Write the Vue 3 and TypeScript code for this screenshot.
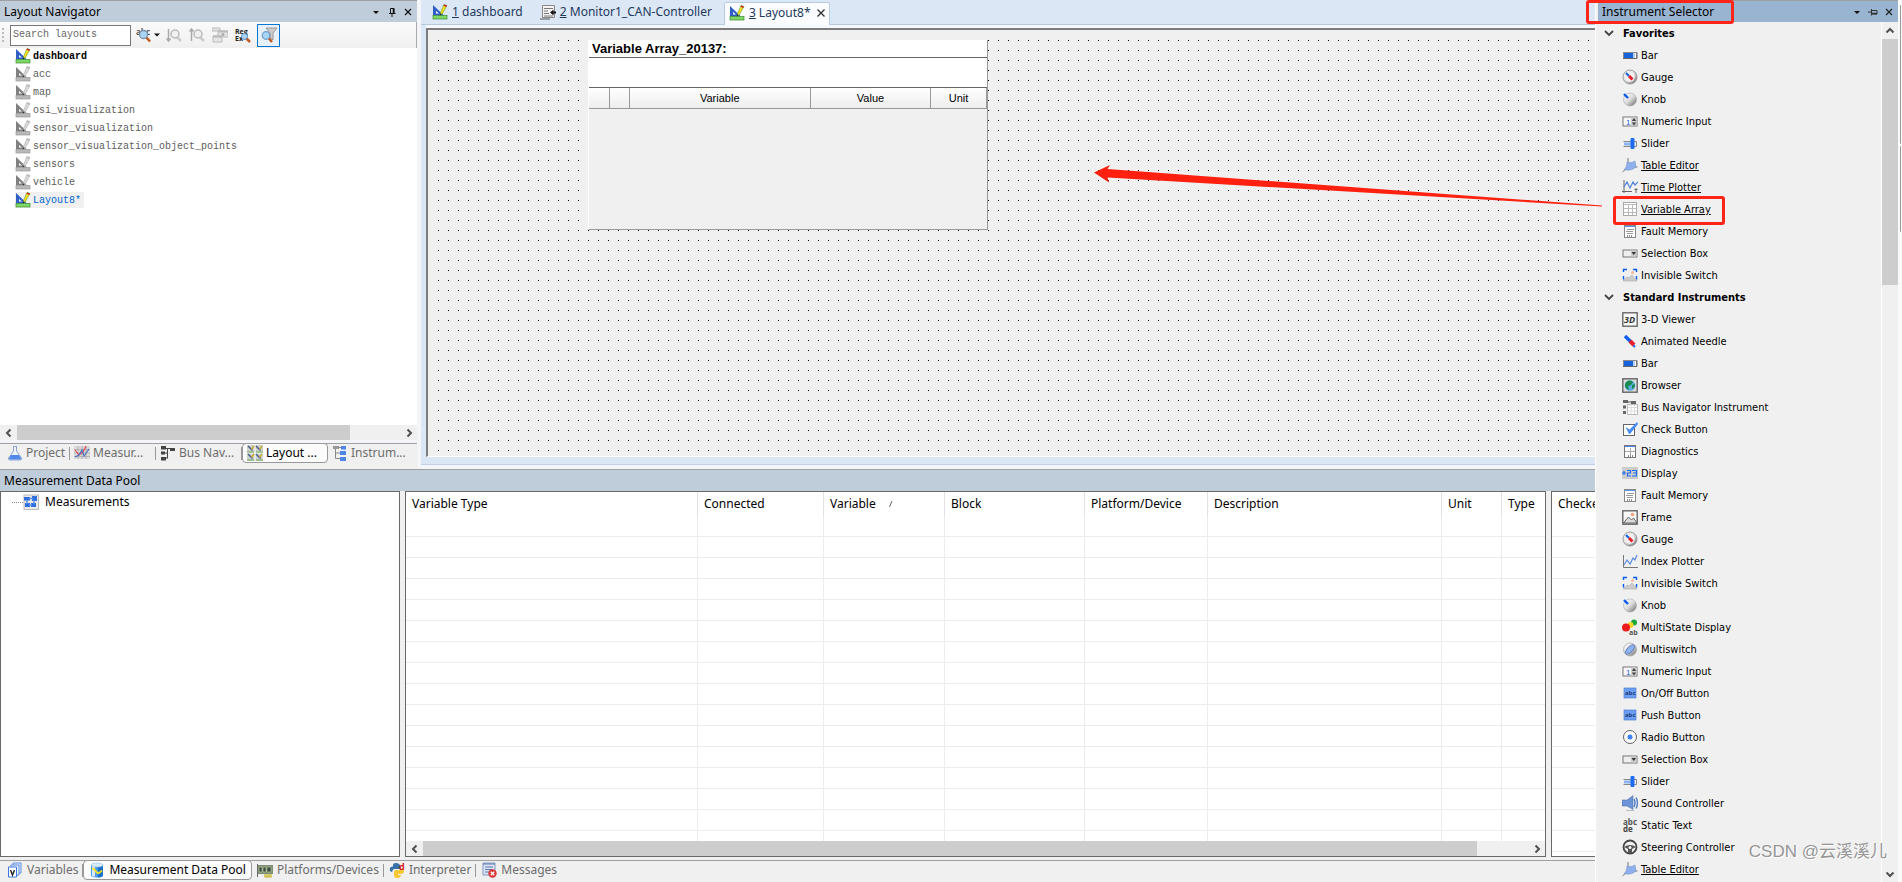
<script setup lang="ts">
import { ref } from 'vue'

const bar = '<rect x="1.5" y="5.5" width="13" height="6" fill="#fff" stroke="#888"/><rect x="2" y="6" width="9" height="5" fill="#1663dc"/><rect x="11" y="6" width="2" height="5" fill="#b8cff5"/><path d="M1 11.5h14v-6" fill="none" stroke="#666"/>'
const gauge = '<circle cx="8" cy="8" r="7" fill="url(#silver)" stroke="#888" stroke-width=".8"/><circle cx="8" cy="8" r="4.800" fill="#f3f3f3"/><path d="M4 4l3 3" stroke="#1663dc" stroke-width="2.200"/><path d="M7 7l3.500 3.500" stroke="#e81e2c" stroke-width="3"/>'
const knob = '<circle cx="8" cy="8.500" r="6.500" fill="url(#silver)" stroke="#999" stroke-width=".5"/><path d="M2 3l4 4" stroke="#0a5cf0" stroke-width="2.400"/>'
const numeric = '<rect x="1" y="4" width="14" height="9" fill="#f8f8f8" stroke="#777"/><rect x="9" y="4.500" width="5.500" height="8" fill="#d0d0d0"/><text x="4" y="11.500" font-size="8" fill="#1663dc" font-family="Liberation Sans">1</text><path d="M9.800 8L12 5l2.200 3zM9.800 9.500L12 12.500l2.200-3z" fill="#444"/>'
const slider = '<path d="M1.500 6.500h13M1.500 11.500h13v-5" fill="none" stroke="#888"/><path d="M2 9h7" stroke="#8eb4f4" stroke-width="3"/><rect x="8.500" y="3" width="4" height="11" rx="1" fill="#1e6df0"/>'
const tableEd = '<path d="M6 1v7M6 10h9.500M6 10L.5 15" stroke="#777" fill="none"/><path d="M5 5q4 2 8-1l1 6q-4 4-9 3H2q3-3 3-8z" fill="#8eb0ee" stroke="#7a92c4" stroke-width=".6"/>'
const timePlot = '<path d="M2 1v13M0 12.500h10M14 9v5M12.500 10.500h3" stroke="#666" fill="none"/><path d="M2 8l3-5 3 6 3-6 2 3 3-3" fill="none" stroke="#4f83dc" stroke-width="1.200"/>'
const varArray = '<rect x="1.500" y="1.500" width="13" height="13" fill="#fff" stroke="#aaa"/><path d="M2 3.500h12M2 7.500h12M2 11.500h12M6.500 4v10M10.500 4v10" stroke="#bbb"/>'
const fault = '<rect x="2.500" y="2.500" width="11" height="12" fill="#fff" stroke="#888"/><path d="M3 3.500h10" stroke="#5a92ee"/><path d="M5 6.500h7M4 8.500h7M5 10.500h6" stroke="#999"/><path d="M5 13h6" stroke="#222" stroke-dasharray="1 1"/>'
const selBox = '<rect x="1" y="5" width="14" height="7" fill="#eee" stroke="#777"/><rect x="9" y="5.500" width="5.500" height="6" fill="#ccc"/><path d="M9.500 7h4.500l-2.200 3z" fill="#333"/>'
const invisible = '<path d="M1.500 5V2.500H5M11 2.500h3.500V5M1.500 9v3.500M14.500 9v3.500" fill="none" stroke="#0a5cf0" stroke-width="1.400"/><circle cx="10.500" cy="5.500" r="1.500" fill="#f3b69a"/><path d="M1 14l4-4 2 1 3-3 5 6z" fill="#ccc" stroke="#aaa" stroke-width=".6"/>'
const steering = '<circle cx="8" cy="8" r="6.500" fill="none" stroke="#444" stroke-width="1.800"/><path d="M2 8q6-4 12 0l-4 2v4H6v-4z" fill="#555"/><circle cx="8" cy="8.500" r="1.500" fill="#eee"/>'
const layoutIcon = (tri: string, pen: string, base: string, tip: string, dark: string) =>
  `<path d="M1 1l11 10.500H1z" fill="${tri}"/><path d="M4 7l3 2.500H4z" fill="#fff"/><path d="M12 .5l3 1-4.500 8-2 1.500V8.500z" fill="${pen}" stroke="${dark}" stroke-width=".5"/><path d="M12 .5l3 1-1 1.500-2.500-1.500z" fill="${tip}"/><path d="M9 9.500l-1 2" stroke="#222"/><rect x="1" y="11.500" width="14" height="3.500" fill="${base}" stroke="${dark}" stroke-width=".7"/>`
const magnifier = (glass: string, handle: string) =>
  `<path d="M9.500 9.500l4.500 5" stroke="${handle}" stroke-width="2.600"/><circle cx="7.500" cy="7.500" r="4" fill="${glass}" stroke="#7a8fa5" stroke-width="1.300"/>`

const icons: Record<string, string> = {
  bar, gauge, knob, numeric, slider, tableEd, timePlot, varArray, fault, selBox, invisible, steering,
  viewer: '<rect x=".8" y="1.800" width="14.400" height="13.400" fill="#fafafa" stroke="#666" stroke-width="1.400"/><text x="2" y="12" font-size="9" font-style="italic" font-weight="bold" fill="#333" font-family="Open Sans">3D</text>',
  needle: '<path d="M3 3l6 6" stroke="#0a5cf0" stroke-width="3.400"/><path d="M8 8l4 4" stroke="#e81e2c" stroke-width="4"/><path d="M11.500 12.500l1.500 1.500" stroke="#0a5cf0" stroke-width="2"/>',
  browser: '<rect x=".8" y="1.800" width="14.400" height="13.400" fill="#ddd" stroke="#666" stroke-width="1.400"/><circle cx="8" cy="8.500" r="5.300" fill="#5aaee0"/><path d="M4 5q4-3 7 0l-2 3-3 1 1 4q-4-2-4-5zM10 8l3-1q0 4-3 5z" fill="#1a8a50"/>',
  busNav: '<path d="M1 1h5v3H1zM1 6.500h3v3H1zM1 12h3v3H1zM9 2h5v3H9z" fill="#666"/><path d="M5 3h4" stroke="#555"/><rect x="5.500" y="5.500" width="10" height="10" fill="#fff" stroke="#bbb"/><path d="M6 8.500h9M6 12h9M9 6v9M12.500 6v9" stroke="#ddd"/>',
  check: '<rect x="1.500" y="3.500" width="11" height="11" fill="#fff" stroke="#666"/><path d="M3.500 6l4 2.500 7.500-7.500 1 2-8 10h-1z" fill="#4a8ef5"/>',
  diag: '<rect x="2.500" y="2.500" width="11" height="12" fill="#fff" stroke="#777"/><path d="M3 3.500h10" stroke="#4a86ee"/><path d="M3 8.500h10M8.500 5v7" stroke="#aaa"/><path d="M6 13h6" stroke="#222" stroke-dasharray="1 1"/>',
  display: '<rect x="0" y="2" width="16" height="12" fill="#ccc"/><path d="M0 8h4M2 6v4M5 5.500h3.500V8H5.500v3H9M10 5.500h4.500v5.500H10M11 8h3.500" fill="none" stroke="#1e6df0" stroke-width="1.200"/>',
  frame: '<rect x=".8" y="1.800" width="14.400" height="13.400" fill="#fafafa" stroke="#666" stroke-width="1.400"/><circle cx="10.500" cy="5.500" r="1.800" fill="#f4a37a"/><path d="M1.500 14l5-6 3 3 2-2 3.500 5z" fill="#ddd" stroke="#555" stroke-width=".9"/>',
  indexPlot: '<path d="M1.500 2v12.500H16" fill="none" stroke="#777"/><path d="M2 12l3-5 3 4 3-6 2 2 2-5" fill="none" stroke="#5a8ae0" stroke-width="1.200"/>',
  multiState: '<circle cx="12" cy="3.500" r="3" fill="#18a83a"/><circle cx="8.500" cy="6" r="3" fill="#f6d62a"/><circle cx="4" cy="8.500" r="4" fill="#ee1b1b"/><text x="7" y="15.500" font-size="7" font-weight="bold" fill="#555" font-family="Open Sans">ab</text>',
  multiSwitch: '<circle cx="8" cy="8.500" r="6.500" fill="url(#silver)" stroke="#999" stroke-width=".6"/><ellipse cx="8" cy="8.500" rx="2.700" ry="6" transform="rotate(45 8 8.500)" fill="#8fb3f0" stroke="#4b6fae" stroke-width=".8"/>',
  abcButton: '<rect x="2" y="3" width="12" height="10" fill="#6c9df5" stroke="#5580cc" stroke-width=".7"/><text x="3" y="10" font-size="6" font-weight="bold" fill="#1b3974" font-family="Open Sans">abc</text>',
  radio: '<circle cx="8" cy="8" r="6.500" fill="#fafafa" stroke="#666"/><circle cx="8" cy="8" r="2.500" fill="#3f82f5"/>',
  sound: '<path d="M0 5h5l6-4.500v14L5 11H0z" fill="#6c93d6" stroke="#4e6ea8" stroke-width=".5"/><path d="M12 4q2 4 0 8M14 2.500q3 5.500 0 11" fill="none" stroke="#5580c8" stroke-width="1.500"/><path d="M4 15.500h8" stroke="#bbb"/>',
  staticText: '<text x="1" y="7.500" font-size="8" font-weight="bold" fill="#555" font-family="Open Sans">abc</text><text x="1" y="15" font-size="8" font-weight="bold" fill="#444" font-family="Open Sans">de</text>',
  layout: layoutIcon('#2f5fc4', '#fde01a', '#7ed867', '#c8202a', '#3a8a30'),
  layoutOff: layoutIcon('#808080', '#dcdcdc', '#b8b8b8', '#bbb', '#999'),
  monitor: '<path d="M2.500 1.500h12v12h-12z" fill="#f4f4f4" stroke="#888"/><path d="M4 4.500h9M4 7h4M4 9.500h5M4 12h9" stroke="#777"/><path d="M0 15h10" stroke="#555"/><path d="M16 8.500h-3" stroke="#111" stroke-width="2"/><path d="M13.500 5.500v6L10 8.500z" fill="#111"/>',
  project: '<path d="M6 1.500h4M6.500 2v4L1.500 13q-.5 2 1.500 2h10q2 0 1.500-2L9.500 6V2" fill="#eef3fb" stroke="#8fa3cc"/><path d="M4 10h8l2 3.500q0 1-1 1H3q-1 0-1-1z" fill="#4f8aea"/>',
  measure: '<rect x="0" y="1" width="16" height="13" fill="#dadada"/><path d="M0 4.500h16M0 8h16M0 11.500h16M4 1v13M8 1v13M12 1v13" stroke="#aaa" stroke-width=".8"/><path d="M1 5l4 5 4-3 3-6" fill="none" stroke="#e34a4a" stroke-width="1.200"/><path d="M1 12l4-2 3-5 2 6 5-7" fill="none" stroke="#4c72c4" stroke-width="1.200"/>',
  busTab: '<path d="M1 1h5v3.500H1zM1 6.500h4v3H1zM1 12h5v3.500H1zM10 3h5v3h-5z" fill="#444"/><path d="M5 3.500h5M7.500 3v10M4 8h4M6 13h2" fill="none" stroke="#444"/>',
  layoutTab: '<path d="M0 0h7.500v7.500H0zM8.500 0H16v7.500H8.500zM0 8.500h7.500V16H0zM8.500 8.500H16V16H8.500z" fill="#cfd2ca"/><path d="M1 1l4.500 4.500M1 9l4.500 4.500M9 1l4.500 4.500M9 9l4.500 4.500" stroke="#48608c" stroke-width="1.500"/><path d="M4.500 4.500l2.500-3.500M4.500 12.500l2.500-3.500M12.500 4.500L15 1M12.500 12.500L15 9" stroke="#c8ae3a" stroke-width="1.500"/><path d="M0 7h7M9 7h7M0 15h7M9 15h7" stroke="#68a860"/>',
  instrTab: '<path d="M3.500 3v10.500h5M3.500 8h5M7 2.500h3" fill="none" stroke="#888"/><rect x="1" y="1" width="6" height="3" fill="#999"/><rect x="9" y="1" width="5" height="3.500" fill="#4d86e8"/><rect x="8" y="6" width="6" height="4" fill="#4d86e8"/><rect x="8" y="12" width="6" height="4" fill="#4d86e8"/>',
  variables: '<path d="M6 1h8v10H6z" fill="#dfe9fb" stroke="#5f8fe6"/><path d="M4 3h8v10H4z" fill="#eaf1fd" stroke="#5f8fe6"/><path d="M1.500 5h8v10h-8z" fill="#fff" stroke="#3c78e0"/><path d="M3.500 8l2 5 2-5" fill="none" stroke="#222" stroke-width="1.400"/>',
  pool: '<path d="M2 3v11q6 3 12 0V3z" fill="#4b9ae8"/><path d="M9 2v13.500q3 0 5-1.500V3z" fill="#1d72c8"/><path d="M3 3v11l3 .8V3z" fill="#d8ebfb"/><ellipse cx="8" cy="3" rx="6" ry="2" fill="#d8ebfb" stroke="#8ab4dc" stroke-width=".5"/><path d="M3 7q2-1 4 2.500T13 8.500" fill="none" stroke="#f5e11c" stroke-width="1.800"/>',
  platforms: '<rect x="0" y="3" width="16" height="9" fill="#7f8f74"/><path d="M2 5h3v5H2zM6 5h3v5H6zM10 5h4v5h-4z" fill="#3e4a40" stroke="#b8c8a0" stroke-width=".7"/><path d="M8 12v3h6v-3M10 12v3M12 12v3" fill="none" stroke="#c6b21c" stroke-width="1.200"/><path d="M.5 2v13" stroke="#666"/>',
  interp: '<path d="M4 3q0-2 3-2t4 2v4H5q-1 0-2 3Q0 9 1 6q1-2 3-1.500z" fill="#3871a8"/><path d="M12 7q3-1 3 2t-3 3H9v1h3q0 3-4 3-3 0-3-3v-3q0-2 2-2h5z" fill="#f8c834"/><text x="10" y="8" font-size="9" font-weight="bold" fill="#d81818" font-family="Open Sans">d</text>',
  messages: '<path d="M2 1h12v12H2z" fill="#dfe6f4" stroke="#8296c0"/><path d="M2 2h12M4 5h8M4 7.500h8M4 10h5" stroke="#5a74b0"/><circle cx="11.500" cy="11.500" r="4.200" fill="#dd3636"/><path d="M9.800 9.800l3.400 3.400M13.200 9.800l-3.400 3.400" stroke="#fff" stroke-width="1.300"/>',
  measurements: '<rect x="1" y="1" width="14.500" height="14.500" fill="#e9e9e9" stroke="#bbb"/><path d="M1 3h6v3.500H1zM2 9h5v4H2zM9 2h5v5H9zM8 9h5v4H8z" fill="#2f6fe0"/><path d="M6 4.500h4M6 11h3M4 6v4M11 6v4" stroke="#5c90ec" stroke-width="1.500"/>',
  findText: '<text x="0" y="8" font-size="8" font-weight="bold" fill="#555" font-family="Open Sans">abc</text>' + magnifier('#a9d5f8', '#c05a20'),
  findDown: '<path d="M2.500 2v12M.5 11.500l2 2.500 2-2.500" fill="none" stroke="#aaa" stroke-width="1.500"/><path d="M11 10l4 4" stroke="#ccc" stroke-width="2.500"/><circle cx="9" cy="7" r="4" fill="#f0f0f0" stroke="#bbb" stroke-width="1.500"/>',
  findUp: '<path d="M2.500 14V2M.5 4.500L2.500 2l2 2.500" fill="none" stroke="#aaa" stroke-width="1.500"/><path d="M11 10l4 4" stroke="#ccc" stroke-width="2.500"/><circle cx="9" cy="7" r="4" fill="#f0f0f0" stroke="#bbb" stroke-width="1.500"/>',
  windows: '<path d="M0 1h8v3H0zM6 4h10v6H6zM1 9h9v6H1z" fill="#e4e4e4" stroke="#bbb"/><path d="M6 4.500h10M1 9.500h9" stroke="#bbb" stroke-width="2"/><circle cx="11" cy="7.500" r="1.500" fill="#aaa"/>',
  regex: '<text x="0" y="7" font-size="7" font-weight="bold" fill="#222" font-family="Open Sans">Reg</text><text x="0" y="14" font-size="7" font-weight="bold" fill="#222" font-family="Open Sans">Ex</text><path d="M11 11l4 4" stroke="#c05a20" stroke-width="2.500"/><circle cx="9.500" cy="9.500" r="3" fill="#a9d5f8" stroke="#5e8ab8"/>',
  filter: '<path d="M5 1h11l-4 5v7l-3-2V6z" fill="#ccc" stroke="#888" stroke-width=".8"/><path d="M7 10.500l4 4.500" stroke="#c05a20" stroke-width="2.500"/><circle cx="5" cy="8.500" r="3.800" fill="#a9d5f8" stroke="#6d9cc8" stroke-width="1.200"/>',
}

const search = ref('')
const activeLayout = ref('Layout8*')
const layouts = ['dashboard', 'acc', 'map', 'osi_visualization', 'sensor_visualization',
  'sensor_visualization_object_points', 'sensors', 'vehicle', 'Layout8*']
const isOn = (name: string): boolean => name === 'dashboard' || name === 'Layout8*'

interface Tab { icon: string; label: string; active?: boolean }
const navTabs: Tab[] = [
  { icon: 'project', label: 'Project' },
  { icon: 'measure', label: 'Measur...' },
  { icon: 'busTab', label: 'Bus Nav...' },
  { icon: 'layoutTab', label: 'Layout ...', active: true },
  { icon: 'instrTab', label: 'Instrum...' },
]
const poolTabs: Tab[] = [
  { icon: 'variables', label: 'Variables' },
  { icon: 'pool', label: 'Measurement Data Pool', active: true },
  { icon: 'platforms', label: 'Platforms/Devices' },
  { icon: 'interp', label: 'Interpreter' },
  { icon: 'messages', label: 'Messages' },
]
const docs = [
  { key: '1', icon: 'layout', label: 'dashboard' },
  { key: '2', icon: 'monitor', label: 'Monitor1_CAN-Controller' },
  { key: '3', icon: 'layout', label: 'Layout8*', active: true },
]
const tools = ['findDown', 'findUp', 'windows', 'regex', 'filter']
const columns = ['Variable Type', 'Connected', 'Variable', 'Block', 'Platform/Device', 'Description', 'Unit', 'Type']

interface Instrument { icon: string; label: string; link?: boolean; marked?: boolean }
const groups: { title: string; items: Instrument[] }[] = [
  {
    title: 'Favorites',
    items: [
      { icon: 'bar', label: 'Bar' },
      { icon: 'gauge', label: 'Gauge' },
      { icon: 'knob', label: 'Knob' },
      { icon: 'numeric', label: 'Numeric Input' },
      { icon: 'slider', label: 'Slider' },
      { icon: 'tableEd', label: 'Table Editor', link: true },
      { icon: 'timePlot', label: 'Time Plotter', link: true },
      { icon: 'varArray', label: 'Variable Array', link: true, marked: true },
      { icon: 'fault', label: 'Fault Memory' },
      { icon: 'selBox', label: 'Selection Box' },
      { icon: 'invisible', label: 'Invisible Switch' },
    ],
  },
  {
    title: 'Standard Instruments',
    items: [
      { icon: 'viewer', label: '3-D Viewer' },
      { icon: 'needle', label: 'Animated Needle' },
      { icon: 'bar', label: 'Bar' },
      { icon: 'browser', label: 'Browser' },
      { icon: 'busNav', label: 'Bus Navigator Instrument' },
      { icon: 'check', label: 'Check Button' },
      { icon: 'diag', label: 'Diagnostics' },
      { icon: 'display', label: 'Display' },
      { icon: 'fault', label: 'Fault Memory' },
      { icon: 'frame', label: 'Frame' },
      { icon: 'gauge', label: 'Gauge' },
      { icon: 'indexPlot', label: 'Index Plotter' },
      { icon: 'invisible', label: 'Invisible Switch' },
      { icon: 'knob', label: 'Knob' },
      { icon: 'multiState', label: 'MultiState Display' },
      { icon: 'multiSwitch', label: 'Multiswitch' },
      { icon: 'numeric', label: 'Numeric Input' },
      { icon: 'abcButton', label: 'On/Off Button' },
      { icon: 'abcButton', label: 'Push Button' },
      { icon: 'radio', label: 'Radio Button' },
      { icon: 'selBox', label: 'Selection Box' },
      { icon: 'slider', label: 'Slider' },
      { icon: 'sound', label: 'Sound Controller' },
      { icon: 'staticText', label: 'Static Text' },
      { icon: 'steering', label: 'Steering Controller' },
      { icon: 'tableEd', label: 'Table Editor', link: true },
    ],
  },
]
</script>

<template>
  <div class="app">
    <svg class="defs" width="0" height="0" aria-hidden="true">
      <defs>
        <linearGradient id="silver" x1="0" y1="0" x2="1" y2="1">
          <stop offset="0" stop-color="#ffffff" />
          <stop offset=".5" stop-color="#dcdcdc" />
          <stop offset="1" stop-color="#666666" />
        </linearGradient>
      </defs>
    </svg>

    <main class="workspace">
      <div class="upper">
        <section class="navigator">
          <header class="pane-head">
            <h2>Layout Navigator</h2>
            <div class="pane-btns">
              <button type="button" aria-label="Menu"><svg viewBox="0 0 10 10"><path d="M2 4h6l-3 3z" fill="#111" /></svg></button>
              <button type="button" aria-label="Pin"><svg viewBox="0 0 10 10"><path d="M3.500 6V1.500h3.500V6M2 6.500h6.500M5 7v3" fill="none" stroke="#111" /><path d="M6.500 1v5" stroke="#111" stroke-width="1.500" /></svg></button>
              <button type="button" aria-label="Close"><svg viewBox="0 0 10 10"><path d="M2 2l6 6M8 2L2 8" stroke="#111" stroke-width="1.200" /></svg></button>
            </div>
          </header>
          <div class="toolbar">
            <span class="grip"></span>
            <input v-model="search" type="text" placeholder="Search layouts" aria-label="Search layouts" />
            <button type="button" class="tool drop" aria-label="Find">
              <svg class="ico" viewBox="0 0 16 16" v-html="icons.findText"></svg>
              <svg class="caret" viewBox="0 0 6 6"><path d="M0 1.500h6l-3 3z" fill="#111" /></svg>
            </button>
            <button v-for="t in tools" :key="t" type="button" class="tool" :class="{ on: t === 'filter' }" :aria-label="t">
              <svg class="ico" viewBox="0 0 16 16" v-html="icons[t]"></svg>
            </button>
          </div>
          <ul class="layouts">
            <li v-for="name in layouts" :key="name">
              <button type="button" :class="{ first: name === 'dashboard', sel: name === activeLayout }" @click="activeLayout = name">
                <svg class="ico" viewBox="0 0 16 16" v-html="isOn(name) ? icons.layout : icons.layoutOff"></svg>
                <span>{{ name }}</span>
              </button>
            </li>
          </ul>
          <div class="hbar">
            <button type="button" aria-label="Scroll left"><svg viewBox="0 0 10 10"><path d="M6.500 1.500L3 5l3.500 3.500" /></svg></button>
            <div class="track"><i class="thumb nav-thumb"></i></div>
            <button type="button" aria-label="Scroll right"><svg viewBox="0 0 10 10"><path d="M3.500 1.500L7 5 3.500 8.500" /></svg></button>
          </div>
          <nav class="tabs nav-tabs">
            <button v-for="t in navTabs" :key="t.label" type="button" :class="{ active: t.active }">
              <svg class="ico" viewBox="0 0 16 16" v-html="icons[t.icon]"></svg><span>{{ t.label }}</span>
            </button>
          </nav>
        </section>

        <section class="desk">
          <nav class="docs">
            <button v-for="d in docs" :key="d.key" type="button" :class="{ active: d.active }">
              <svg class="ico" viewBox="0 0 16 16" v-html="icons[d.icon]"></svg>
              <span><u>{{ d.key }}</u> {{ d.label }}</span>
              <svg v-if="d.active" class="x" viewBox="0 0 10 10"><path d="M1.500 1.500l7 7M8.500 1.500l-7 7" stroke="#333" stroke-width="1.400" /></svg>
            </button>
          </nav>
          <div class="canvas">
            <div class="dots">
              <div class="widget">
                <h3>Variable Array_20137:</h3>
                <div class="blank"></div>
                <table>
                  <colgroup><col class="w20" /><col class="w20" /><col /><col class="w120" /><col class="w56" /></colgroup>
                  <thead><tr><th></th><th></th><th>Variable</th><th>Value</th><th>Unit</th></tr></thead>
                </table>
              </div>
            </div>
          </div>
        </section>
      </div>

      <section class="pool">
        <header class="pane-head"><h2>Measurement Data Pool</h2></header>
        <div class="pool-body">
          <div class="box tree">
            <span class="stub"></span>
            <svg class="ico" viewBox="0 0 16 16" v-html="icons.measurements"></svg>
            <span>Measurements</span>
          </div>
          <div class="box grid">
            <div class="rows">
              <table>
                <colgroup>
                  <col class="c1" /><col class="c2" /><col class="c3" /><col class="c4" /><col class="c5" /><col class="c6" /><col class="c7" /><col />
                </colgroup>
                <thead>
                  <tr>
                    <th v-for="c in columns" :key="c">{{ c }}<svg v-if="c === 'Variable'" class="sort" viewBox="0 0 6 8"><path d="M1.500 7L4 1" stroke="#666" /></svg></th>
                  </tr>
                </thead>
                <tbody><tr v-for="n in 16" :key="n"><td v-for="c in columns" :key="c"></td></tr></tbody>
              </table>
            </div>
            <div class="hbar">
              <button type="button" aria-label="Scroll left"><svg viewBox="0 0 10 10"><path d="M6.500 1.500L3 5l3.500 3.500" /></svg></button>
              <div class="track"><i class="thumb pool-thumb"></i></div>
              <button type="button" aria-label="Scroll right"><svg viewBox="0 0 10 10"><path d="M3.500 1.500L7 5 3.500 8.500" /></svg></button>
            </div>
          </div>
          <div class="box side">
            <table>
              <thead><tr><th>Checked</th></tr></thead>
              <tbody><tr v-for="n in 16" :key="n"><td></td></tr></tbody>
            </table>
          </div>
        </div>
        <nav class="tabs pool-tabs">
          <button v-for="t in poolTabs" :key="t.label" type="button" :class="{ active: t.active }">
            <svg class="ico" viewBox="0 0 16 16" v-html="icons[t.icon]"></svg><span>{{ t.label }}</span>
          </button>
        </nav>
      </section>
    </main>

    <aside class="selector">
      <div class="sel-main">
        <header class="pane-head blue">
          <h2>Instrument Selector</h2>
          <div class="pane-btns">
            <button type="button" aria-label="Menu"><svg viewBox="0 0 10 10"><path d="M2 4h6l-3 3z" fill="#111" /></svg></button>
            <button type="button" aria-label="Pin"><svg viewBox="0 0 10 10"><path d="M4 3.500h5v3.500H4M3.500 2v6.500M3 5H0" fill="none" stroke="#333" /><path d="M4 6.500h5" stroke="#333" stroke-width="1.500" /></svg></button>
            <button type="button" aria-label="Close"><svg viewBox="0 0 10 10"><path d="M2 2l6 6M8 2L2 8" stroke="#222" stroke-width="1.200" /></svg></button>
          </div>
          <i class="mark head-mark"></i>
        </header>
        <div class="sel-body">
          <div class="list">
            <section v-for="g in groups" :key="g.title">
              <h3><svg viewBox="0 0 10 10"><path d="M1 3l4 4 4-4" fill="none" stroke="#444" stroke-width="1.800" /></svg><span>{{ g.title }}</span></h3>
              <ul>
                <li v-for="it in g.items" :key="it.label">
                  <svg class="ico" viewBox="0 0 16 16" v-html="icons[it.icon]"></svg>
                  <a v-if="it.link" href="#">{{ it.label }}</a>
                  <span v-else>{{ it.label }}</span>
                  <i v-if="it.marked" class="mark item-mark"></i>
                </li>
              </ul>
            </section>
          </div>
          <div class="vbar">
            <button type="button" aria-label="Scroll up"><svg viewBox="0 0 10 10"><path d="M1.500 6.500L5 3l3.500 3.500" /></svg></button>
            <div class="track"><i class="thumb"></i></div>
            <button type="button" aria-label="Scroll down"><svg viewBox="0 0 10 10"><path d="M1.500 3.500L5 7l3.500-3.500" /></svg></button>
          </div>
        </div>
      </div>
      <div class="edge"><i class="e1"></i><i class="e2"></i></div>
    </aside>

    <svg class="arrow" viewBox="0 0 508 42" aria-hidden="true">
      <path d="M0 7.500L16 0l-2.500 4L508 40.500v1L13.500 12.500l1.500 5z" fill="#ff2010" />
    </svg>
    <div class="watermark">CSDN @云溪溪儿</div>
  </div>
</template>

<style>
body { margin: 0; }
</style>

<style scoped>
* { box-sizing: border-box; }
.app {
  position: relative;
  display: grid;
  grid-template-columns: minmax(0, 1fr) 307px;
  height: 100vh;
  overflow: hidden;
  background: #f0f0f0;
  color: #000;
  font: 12px/18px "Noto Sans", "Open Sans", sans-serif;
}
.defs { position: absolute; }
h2, h3, ul { margin: 0; padding: 0; font-weight: normal; }
ul { list-style: none; }
button { margin: 0; padding: 0; border: 0; background: none; color: inherit; font: inherit; text-align: left; }
.ico { flex: none; width: 16px; height: 16px; }

.workspace { display: grid; grid-template-rows: minmax(0, 469fr) minmax(0, 413fr); min-width: 0; overflow: hidden; }
.upper { display: flex; min-height: 0; background: #f3f5f9; }

.pane-head {
  position: relative;
  display: flex;
  align-items: center;
  justify-content: space-between;
  flex: none;
  height: 22px;
  padding: 0 4px;
  background: #bfcdda;
  border-top: 1px solid #a0a0a0;
}
.pane-head h2 { font-size: 12px; }
.pane-btns { display: flex; gap: 6px; }
.pane-btns svg { display: block; width: 10px; height: 10px; }

.navigator { display: flex; flex-direction: column; flex: none; width: 417px; margin-right: 4px; }
.toolbar { display: flex; align-items: center; gap: 5px; height: 26px; padding-left: 2px; background: linear-gradient(#fafafa, #f0f0f0); border-right: 1px solid #aaa; }
.grip { width: 3px; height: 14px; border-left: 2px dotted #bbb; }
.toolbar input { width: 121px; height: 21px; padding: 0 2px 2px; border: 1px solid #777; background: #fff; font: 10px/16px "Liberation Mono", monospace; }
.toolbar input::placeholder { color: #666; opacity: 1; }
.tool { display: grid; place-items: center; width: 18px; height: 22px; }
.tool.drop { display: flex; align-items: center; gap: 2px; width: 24px; }
.caret { width: 6px; height: 6px; }
.tool.on { width: 23px; height: 23px; border: 1px solid #0078d7; background: #e8f1fa; }
.layouts { flex: 1; min-height: 0; background: #fff; overflow: hidden; padding-left: 15px; }
.layouts li { height: 18px; }
.layouts button { display: flex; align-items: center; gap: 2px; height: 16px; padding-right: 3px; color: #5c5c5c; font: 10px/16px "Liberation Mono", monospace; }
.layouts span { padding-top: 2px; }
.layouts .first { color: #000; font-weight: bold; }
.layouts .sel { background: #f0f0f0; color: #0066cc; }

.hbar { display: flex; flex: none; height: 15px; background: #f0f0f0; }
.hbar button { display: grid; place-items: center; width: 17px; }
.hbar svg, .vbar svg { width: 10px; height: 10px; fill: none; stroke: #505050; stroke-width: 2; }
.track { position: relative; flex: 1; }
.thumb { display: block; background: #cdcdcd; }
.hbar .thumb { height: 100%; }
.nav-thumb { width: 87%; }
.pool-thumb { width: 95.4%; }

.tabs { display: flex; flex: none; border-top: 1px solid #a0a0a0; background: #f0f0f0; color: #6d6d6d; }
.tabs button { position: relative; display: flex; align-items: center; gap: 3px; height: 18px; padding: 0 4px; white-space: nowrap; }
.tabs button:not(.active):not(:last-child)::after { content: ""; position: absolute; right: 0; top: 3px; height: 13px; border-right: 1px solid #999; }
.tabs .active { height: 20px; margin-top: -1px; padding-bottom: 1px; border: 1px solid #999; border-radius: 4px; background: #fcfcfd; color: #000; }
.nav-tabs { height: 26px; margin-top: 3px; padding-left: 3px; }
.nav-tabs button { flex: none; width: 86px; }
.nav-tabs button:first-child { width: 67px; }
.nav-tabs .active { width: 86px; }

.desk { display: flex; flex-direction: column; flex: 1; min-width: 0; margin-bottom: 4px; padding: 0 0 7px 5px; background: #dce7f5; border-bottom: 1px solid #c0d0e4; }
.docs { display: flex; align-items: flex-end; height: 25px; margin-left: -5px; padding-left: 11px; border-bottom: 1px solid #b8c9e0; color: #1e395b; }
.docs button { display: flex; align-items: center; gap: 4px; height: 24px; margin-right: 17px; white-space: nowrap; }
.docs .active { height: 23px; margin: 0 0 -1px -5px; padding: 0 3px 3px 4px; border: 1px solid #b8c9e0; border-bottom: 0; border-radius: 2px 2px 0 0; background: #fafcff; }
.docs .x { width: 10px; height: 10px; margin-left: 1px; }
.canvas { flex: 1; min-height: 0; margin-top: 3px; box-shadow: 0 -3px #f5f8fd; border-top: 2px solid #7c7c7c; border-left: 2px solid #7c7c7c; border-bottom: 1px solid #fff; background: #f0f0f0; padding: 10px 0 0 10px; overflow: hidden; }
.dots {
  position: relative;
  height: 100%;
  background:
    linear-gradient(transparent 1px, #f0f0f0 1px) 0 0 / 10px 10px,
    linear-gradient(90deg, #000 1px, transparent 1px) 0 0 / 10px 10px;
}
.widget { position: absolute; left: 150px; top: 0; width: 400px; height: 190px; background: #f0f0f0; border-left: 1px solid #fff; border-right: 1px solid #999; border-bottom: 1px solid #999; }
.widget h3 { height: 18px; padding-left: 3px; background: #fff; border-bottom: 1px solid #666; font: bold 13px/17px "Liberation Sans", sans-serif; }
.blank { height: 30px; background: #fff; border-bottom: 1px solid #666; }
.widget table { width: 100%; table-layout: fixed; border-collapse: collapse; font: 11px/18px "Liberation Sans", sans-serif; }
.widget th { height: 20px; padding: 1px 0 0; border-right: 1px solid #999; border-bottom: 1px solid #999; background: linear-gradient(#fff, #ededed); font-weight: normal; }
.w20 { width: 20px; }
.w120 { width: 120px; }
.w56 { width: 56px; }

.pool { display: flex; flex-direction: column; min-height: 0; }
.pool-body { display: flex; flex: 1; gap: 5px; min-height: 0; background: #f0f0f0; }
.box { background: #fff; border: 1px solid #696969; overflow: hidden; }
.tree { display: flex; align-items: flex-start; flex: none; width: 400px; padding: 2px 0 0 11px; }
.stub { width: 11px; margin-top: 8px; border-top: 1px dotted #888; }
.tree span:last-child { margin-left: 6px; line-height: 16px; }
.grid { display: flex; flex-direction: column; flex: 1; min-width: 0; }
.rows { flex: 1; min-height: 0; overflow: hidden; }
.pool-body table { width: 100%; table-layout: fixed; border-collapse: separate; border-spacing: 0; }
.pool-body th { height: 24px; padding: 0 0 0 6px; border-right: 1px solid #e2e2e2; font-size: 12px; font-weight: normal; line-height: 22px; text-align: left; white-space: nowrap; }
.pool-body td { height: 21px; padding: 0; border-right: 1px solid #ececec; border-bottom: 1px solid #ececec; }
.pool-body th:last-child, .pool-body td:last-child { border-right: 0; }
.sort { width: 6px; height: 8px; margin-left: 12px; }
.c1 { width: 292px; }
.c2 { width: 126px; }
.c3 { width: 121px; }
.c4 { width: 140px; }
.c5 { width: 123px; }
.c6 { width: 234px; }
.c7 { width: 60px; }
.side { flex: none; width: 44px; border-right: 0; }
.pool-tabs { height: 22px; margin-top: 3px; padding-left: 2px; }
.pool-tabs button { gap: 4px; padding: 0 5px; }

.selector { display: flex; min-width: 0; height: 100vh; border-left: 1px solid #fff; }
.sel-main { display: flex; flex-direction: column; flex: 1; min-width: 0; padding-left: 2px; }
.blue { background: #99b4d1; }
.sel-body { display: flex; flex: 1; min-height: 0; }
.list { flex: 1; min-width: 0; overflow: hidden; border-right: 1px solid #fff; font-family: "DejaVu Sans Condensed", "Open Sans", sans-serif; font-size: 11px; }
.list h3 { display: flex; align-items: center; height: 22px; padding-left: 6px; font-size: 11px; font-weight: bold; }
.list h3 svg { width: 10px; height: 10px; margin-right: 9px; }
.list li { position: relative; display: flex; align-items: center; gap: 3px; height: 22px; padding-left: 24px; }
.list a, .list span { padding-top: 2px; }
.list a { color: #000; }
.vbar { display: flex; flex-direction: column; width: 16px; }
.vbar button { display: grid; place-items: center; height: 17px; }
.vbar .thumb { height: 29.8%; }
.edge { width: 4px; padding: 5px 0 0 2px; background: #fafafa; }
.edge i { display: block; border-left: 1px solid #999; border-radius: 2px; }
.e1 { height: 139px; }
.e2 { height: 86px; margin-top: 2px; }

.mark { position: absolute; border: 3px solid #ff2418; border-radius: 3px; pointer-events: none; }
.head-mark { left: -12px; top: -1px; width: 148px; height: 24px; z-index: 2; }
.item-mark { left: 15px; top: -2px; width: 112px; height: 29px; z-index: 2; }
.arrow { position: absolute; top: 165px; right: 300px; width: 508px; height: 42px; }
.watermark { position: absolute; right: 15px; bottom: 18px; color: #969696; font: 17px/24px "Liberation Sans", "Noto Sans CJK SC", sans-serif; text-shadow: 1px 1px #fff; }
</style>
